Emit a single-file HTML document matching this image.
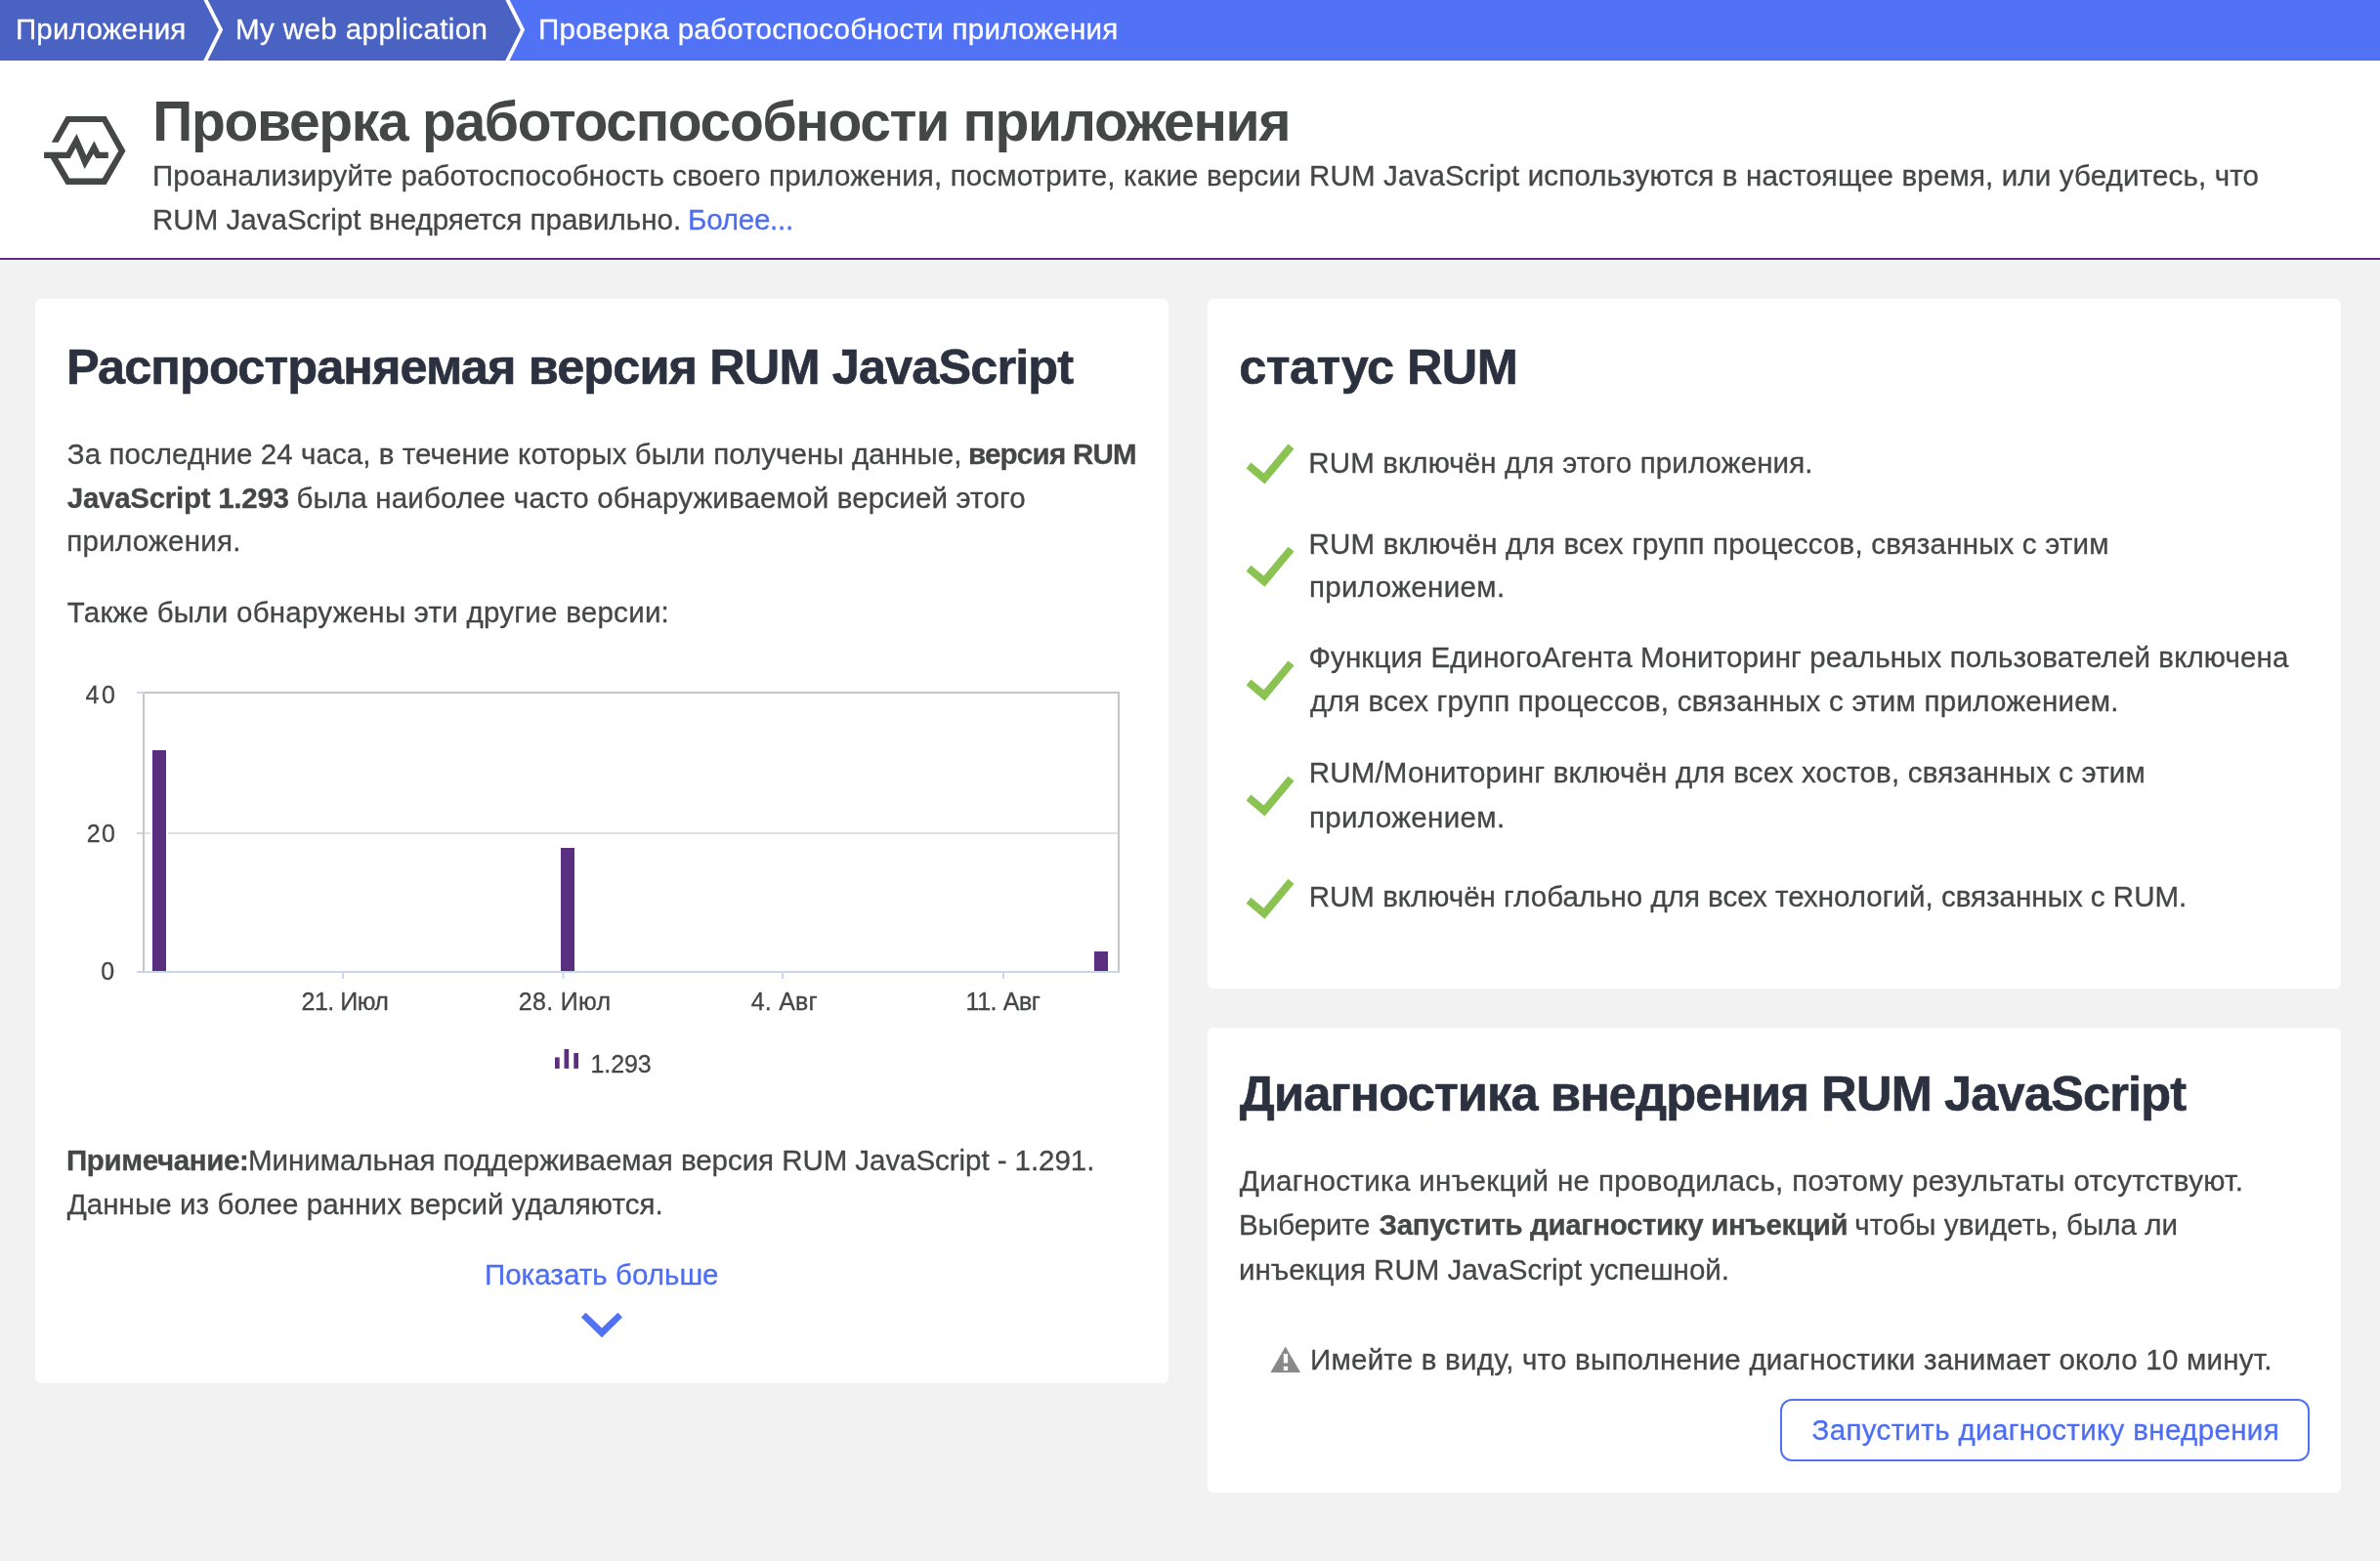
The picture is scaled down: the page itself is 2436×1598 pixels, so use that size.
<!DOCTYPE html>
<html lang="ru"><head><meta charset="utf-8"><title>Проверка работоспособности приложения</title>
<style>
*{box-sizing:border-box;margin:0;padding:0}
html,body{width:2436px;height:1598px;overflow:hidden}
body{background:#f2f2f2;font-family:"Liberation Sans",sans-serif;position:relative;color:#454646}
#fg{position:absolute;left:0;top:0;width:2436px;height:1598px;will-change:transform}
.t{position:absolute;white-space:nowrap;line-height:60px;font-weight:400;display:block;-webkit-text-stroke:0.3px currentColor}
b.t{font-weight:700}
h1 .t{-webkit-text-stroke:0}
h2 .t{-webkit-text-stroke:0.6px currentColor}
a{text-decoration:none}
.bc{position:absolute;left:0;top:0;width:2436px;height:62px;background:#5272f6}
.bc svg{position:absolute;left:0;top:0}
.hdr{position:absolute;left:0;top:62px;width:2436px;height:204px;background:#fff;border-bottom:2px solid #622895}
.card{position:absolute;background:#fff;border-radius:6px}
#c1{left:36px;top:306px;width:1160px;height:1110px}
#c2{left:1236px;top:306px;width:1160px;height:706px}
#c3{left:1236px;top:1052px;width:1160px;height:476px}
.abs{position:absolute;left:0;top:0}
.btn{position:absolute;left:1822px;top:1432px;width:542px;height:64px;border:2px solid #5272f5;border-radius:12px;background:#fff}
</style></head><body>
<div id="bg">
<div class="bc">
<svg width="2436" height="62" viewBox="0 0 2436 62">
<polygon points="0,0 519.85,0 534.95,30.6 519.05,62 0,62" fill="#4a62c2"/>
<polyline points="209.6,-2 226.05,30.6 209.4,64" fill="none" stroke="#fff" stroke-width="3.85"/>
<polyline points="518.55,-2 535.0,30.6 518.35,64" fill="none" stroke="#fff" stroke-width="3.85"/>
</svg>
</div>
<div class="hdr"></div>
<svg class="abs" width="200" height="260" viewBox="0 0 200 260">
<g fill="#454646">
<path d="M52.8 145.75 L67.7 119.1 L108.6 119.1 L128.5 154.4 L108.6 188.9 L67.7 188.9 L51.8 161.9 L59.3 161.9 L71.1 182.5 L104.9 182.5 L121.3 154.4 L104.9 125.1 L71.4 125.1 L59.6 145.75 Z"/>
<path d="M45.1 155.85 L68 155.85 L78.5 137.1 L88.3 159.3 L96.4 144.3 L102 155.85 L110.8 155.85 L110.8 161.9 L98.2 161.9 L95.65 157.6 L86.6 173 L77.5 151.2 L71.7 161.9 L45.1 161.9 Z"/>
</g>
</svg>
<div class="card" id="c1"></div>
<div class="card" id="c2"></div>
<div class="card" id="c3"></div>
<svg class="abs" width="1218" height="1598" viewBox="0 0 1218 1598">
<rect x="147" y="709" width="998" height="286" fill="#fff" stroke="#c6c6c6" stroke-width="2"/>
<line x1="148" y1="853" x2="1144" y2="853" stroke="#e0e0e0" stroke-width="2"/>
<line x1="140" y1="709" x2="148" y2="709" stroke="#ccd6eb" stroke-width="2"/>
<line x1="140" y1="853" x2="146" y2="853" stroke="#ccd6eb" stroke-width="2"/>
<line x1="140" y1="995" x2="1146" y2="995" stroke="#ccd6eb" stroke-width="2"/>
<g fill="#5b2f80" stroke="#fff" stroke-width="2">
<rect x="155" y="767" width="16" height="229"/>
<rect x="573" y="867" width="16" height="129"/>
<rect x="1119" y="973" width="16" height="23"/>
</g>
<line x1="140" y1="995" x2="1146" y2="995" stroke="#ccd6eb" stroke-width="2"/>
<g stroke="#ccd6eb" stroke-width="2">
<line x1="351" y1="995" x2="351" y2="1002"/><line x1="576.5" y1="995" x2="576.5" y2="1002"/><line x1="801" y1="995" x2="801" y2="1002"/><line x1="1027" y1="995" x2="1027" y2="1002"/>
</g>
<g fill="#5b2f80">
<rect x="568" y="1082.4" width="4.7" height="11.5"/><rect x="577.5" y="1074" width="4.7" height="19.9"/><rect x="587.3" y="1078" width="4.7" height="15.9"/>
</g>
<polygon fill="#5272f5" points="594.9,1348.5 599.55,1343.65 616,1359.5 632.4,1343.65 637,1348.5 616,1369.2"/>
</svg>
<svg class="abs" width="2436" height="1598" viewBox="0 0 2436 1598">
<polygon fill="#8bc353" points="1275.6,479.5 1280.4,473.5 1293.5,484.4 1318.4,454.5 1324.5,459.4 1294.5,495.5"/><polygon fill="#8bc353" points="1275.6,584.7 1280.4,578.7 1293.5,589.6 1318.4,559.7 1324.5,564.6 1294.5,600.7"/><polygon fill="#8bc353" points="1275.6,701.4 1280.4,695.4 1293.5,706.3 1318.4,676.4 1324.5,681.3 1294.5,717.4"/><polygon fill="#8bc353" points="1275.6,819.6 1280.4,813.6 1293.5,824.5 1318.4,794.6 1324.5,799.5 1294.5,835.6"/><polygon fill="#8bc353" points="1275.6,924.8 1280.4,918.8 1293.5,929.7 1318.4,899.8 1324.5,904.7 1294.5,940.8"/>
<path d="M1315.7 1378.4 L1331.1 1404.9 L1300.4 1404.9 Z" fill="#898989"/>
<rect x="1313.8" y="1385.9" width="4.3" height="9.5" fill="#fff"/><rect x="1313.8" y="1398.8" width="4.3" height="4.2" fill="#fff"/>
</svg>
<div class="btn"></div>
</div>
<main id="fg">
<nav><span class="t" style="left:15.96px;top:-0.12px;font-size:29.5px;letter-spacing:0.200px;color:#ffffff">Приложения</span>
<span class="t" style="left:241.04px;top:-0.12px;font-size:29.5px;letter-spacing:0.418px;color:#ffffff">My web application</span>
<span class="t" style="left:551.00px;top:-0.12px;font-size:29.5px;letter-spacing:0.258px;color:#ffffff">Проверка работоспособности приложения</span></nav>
<h1><b class="t" style="left:156.28px;top:93.95px;font-size:57px;letter-spacing:-1.317px;color:#454646">Проверка работоспособности приложения</b></h1>
<p><span class="t" style="left:156.00px;top:149.58px;font-size:29.5px;letter-spacing:0.156px;color:#454646">Проанализируйте работоспособность своего приложения, посмотрите, какие версии RUM JavaScript используются в настоящее время, или убедитесь, что</span>
<span class="t" style="left:156.00px;top:194.90px;font-size:29.5px;letter-spacing:0.026px;color:#454646">RUM JavaScript внедряется правильно.</span><a><span class="t" style="left:704.00px;top:194.90px;font-size:29.5px;letter-spacing:-0.206px;color:#4d6df3">Более...</span></a></p>
<section>
<h2><b class="t" style="left:67.90px;top:345.78px;font-size:50.5px;letter-spacing:-0.903px;color:#2c3140">Распространяемая версия RUM JavaScript</b></h2>
<p><span class="t" style="left:68.80px;top:434.78px;font-size:29.5px;letter-spacing:0.070px;color:#454646">За последние 24 часа, в течение которых были получены данные,</span>
<b class="t" style="left:990.90px;top:434.78px;font-size:29.5px;letter-spacing:-0.733px;color:#454646">версия RUM</b>
<b class="t" style="left:68.76px;top:479.68px;font-size:29.5px;letter-spacing:-0.268px;color:#454646">JavaScript 1.293</b>
<span class="t" style="left:303.50px;top:479.68px;font-size:29.5px;letter-spacing:0.171px;color:#454646">была наиболее часто обнаруживаемой версией этого</span>
<span class="t" style="left:68.28px;top:523.88px;font-size:29.5px;letter-spacing:0.258px;color:#454646">приложения.</span></p>
<p><span class="t" style="left:68.76px;top:596.78px;font-size:29.5px;letter-spacing:0.262px;color:#454646">Также были обнаружены эти другие версии:</span></p>
<div><span class="t" style="left:87.40px;top:681.34px;font-size:25px;letter-spacing:2.600px;color:#454646">40</span>
<span class="t" style="left:88.70px;top:823.34px;font-size:25px;letter-spacing:1.300px;color:#454646">20</span>
<span class="t" style="left:103.28px;top:964.38px;font-size:25px;letter-spacing:0.000px;color:#454646">0</span>
<span class="t" style="left:308.50px;top:995.04px;font-size:25px;letter-spacing:-0.500px;color:#454646">21. Июл</span>
<span class="t" style="left:530.80px;top:995.04px;font-size:25px;letter-spacing:0.317px;color:#454646">28. Июл</span>
<span class="t" style="left:768.76px;top:995.04px;font-size:25px;letter-spacing:0.220px;color:#454646">4. Авг</span>
<span class="t" style="left:988.54px;top:995.04px;font-size:25px;letter-spacing:-0.430px;color:#454646">11. Авг</span>
<span class="t" style="left:604.40px;top:1058.94px;font-size:25px;letter-spacing:-0.050px;color:#454646">1.293</span></div>
<p><b class="t" style="left:67.90px;top:1157.74px;font-size:29.5px;letter-spacing:-0.360px;color:#454646">Примечание:</b>
<span class="t" style="left:254.10px;top:1157.74px;font-size:29.5px;letter-spacing:-0.049px;color:#454646">Минимальная поддерживаемая версия RUM JavaScript - 1.291.</span>
<span class="t" style="left:68.70px;top:1203.18px;font-size:29.5px;letter-spacing:0.082px;color:#454646">Данные из более ранних версий удаляются.</span></p>
<a><span class="t" style="left:495.90px;top:1275.18px;font-size:29.5px;letter-spacing:0.050px;color:#4d6df3">Показать больше</span></a>
</section>
<section>
<h2><b class="t" style="left:1268.32px;top:345.94px;font-size:50.5px;letter-spacing:-0.597px;color:#2c3140">статус RUM</b></h2>
<ul style="list-style:none">
<li><span class="t" style="left:1339.30px;top:443.58px;font-size:29.5px;letter-spacing:0.128px;color:#454646">RUM включён для этого приложения.</span></li>
<li><span class="t" style="left:1339.50px;top:526.58px;font-size:29.5px;letter-spacing:0.192px;color:#454646">RUM включён для всех групп процессов, связанных с этим</span>
<span class="t" style="left:1339.90px;top:571.18px;font-size:29.5px;letter-spacing:0.364px;color:#454646">приложением.</span></li>
<li><span class="t" style="left:1339.50px;top:642.98px;font-size:29.5px;letter-spacing:0.127px;color:#454646">Функция ЕдиногоАгента Мониторинг реальных пользователей включена</span>
<span class="t" style="left:1340.96px;top:688.18px;font-size:29.5px;letter-spacing:0.252px;color:#454646">для всех групп процессов, связанных с этим приложением.</span></li>
<li><span class="t" style="left:1339.70px;top:760.98px;font-size:29.5px;letter-spacing:0.184px;color:#454646">RUM/Мониторинг включён для всех хостов, связанных с этим</span>
<span class="t" style="left:1339.90px;top:806.90px;font-size:29.5px;letter-spacing:0.364px;color:#454646">приложением.</span></li>
<li><span class="t" style="left:1339.70px;top:888.18px;font-size:29.5px;letter-spacing:0.016px;color:#454646">RUM включён глобально для всех технологий, связанных с RUM.</span></li>
</ul>
</section>
<section>
<h2><b class="t" style="left:1268.80px;top:1089.90px;font-size:50.5px;letter-spacing:-0.826px;color:#2c3140">Диагностика внедрения RUM JavaScript</b></h2>
<p><span class="t" style="left:1268.80px;top:1179.08px;font-size:29.5px;letter-spacing:0.352px;color:#454646">Диагностика инъекций не проводилась, поэтому результаты отсутствуют.</span>
<span class="t" style="left:1268.00px;top:1223.98px;font-size:29.5px;letter-spacing:-0.271px;color:#454646">Выберите</span>
<b class="t" style="left:1411.60px;top:1223.98px;font-size:29.5px;letter-spacing:-0.362px;color:#454646">Запустить диагностику инъекций</b>
<span class="t" style="left:1898.32px;top:1223.98px;font-size:29.5px;letter-spacing:0.048px;color:#454646">чтобы увидеть, была ли</span>
<span class="t" style="left:1268.00px;top:1269.74px;font-size:29.5px;letter-spacing:0.001px;color:#454646">инъекция RUM JavaScript успешной.</span></p>
<p><span class="t" style="left:1341.10px;top:1362.28px;font-size:29.5px;letter-spacing:0.223px;color:#454646">Имейте в виду, что выполнение диагностики занимает около 10 минут.</span></p>
<a><span class="t" style="left:1854.50px;top:1433.74px;font-size:29.5px;letter-spacing:0.357px;color:#4d6df3">Запустить диагностику внедрения</span></a>
</section>
</main>
</body></html>
